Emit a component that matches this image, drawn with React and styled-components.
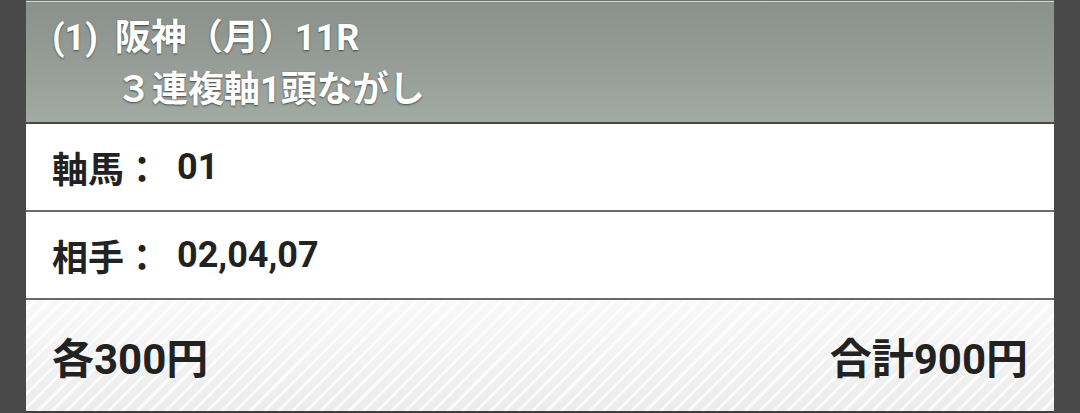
import React from "react";
import styled, { createGlobalStyle } from "styled-components";

const GlobalStyle = createGlobalStyle`
  html, body {
    margin: 0;
    padding: 0;
    background: #494949;
  }
  body {
    font-family: Roboto, "Noto Sans CJK JP", sans-serif;
  }
`;

const Page = styled.div`
  padding: 0 26px;
  height: 413px;
  overflow: hidden;
`;

const Card = styled.div`
  background: #fff;
  border-top: 1px solid #6f716f;
`;

const Header = styled.div`
  height: 123px;
  box-sizing: border-box;
  padding: 10px 0 0 26px;
  border-top: 1px solid #d3d7d3;
  border-bottom: 2px solid #464846;
  background: linear-gradient(#8a908b, #a2aaa4);
  color: #fff;
  font-size: 36px;
  font-weight: 700;
  line-height: 52px;
  text-shadow: 0 1px 2px rgba(0, 0, 0, 0.55);
`;

const HeaderLine = styled.div`
  padding-left: ${(props) => props.indent || 0}px;
  white-space: pre;
`;

const RaceNo = styled.span`
  margin-right: 8px;
`;

const Row = styled.div`
  display: flex;
  align-items: center;
  height: 86px;
  padding-left: 26px;
  border-bottom: 2px solid #6a6a6a;
  font-size: 36px;
  font-weight: 700;
  color: #222;
`;

const Label = styled.span`
  margin-right: 17px;
`;

const Footer = styled.div`
  display: flex;
  align-items: center;
  justify-content: space-between;
  height: 111px;
  padding: 0 26px;
  border-bottom: 2px solid #3e3e3e;
  font-size: 42px;
  font-weight: 700;
  color: #222;
  background-color: #f3f3f3;
  background-image: repeating-linear-gradient(
      -45deg,
      rgba(255, 255, 255, 0) 0px,
      rgba(255, 255, 255, 0) 7px,
      rgba(255, 255, 255, 0.75) 7px,
      rgba(255, 255, 255, 0.75) 10px
    ),
    linear-gradient(#f9f9f9, #ececec);
`;

export default function App() {
  return (
    <>
      <GlobalStyle />
      <Page>
        <Card>
          <Header>
            <HeaderLine>
              <RaceNo>(1)</RaceNo> 阪神（月）11R
            </HeaderLine>
            <HeaderLine indent={64}>３連複軸1頭ながし</HeaderLine>
          </Header>
          <Row>
            <Label>軸馬：</Label>
            01
          </Row>
          <Row>
            <Label>相手：</Label>
            02,04,07
          </Row>
          <Footer>
            <span>各300円</span>
            <span>合計900円</span>
          </Footer>
        </Card>
      </Page>
    </>
  );
}
